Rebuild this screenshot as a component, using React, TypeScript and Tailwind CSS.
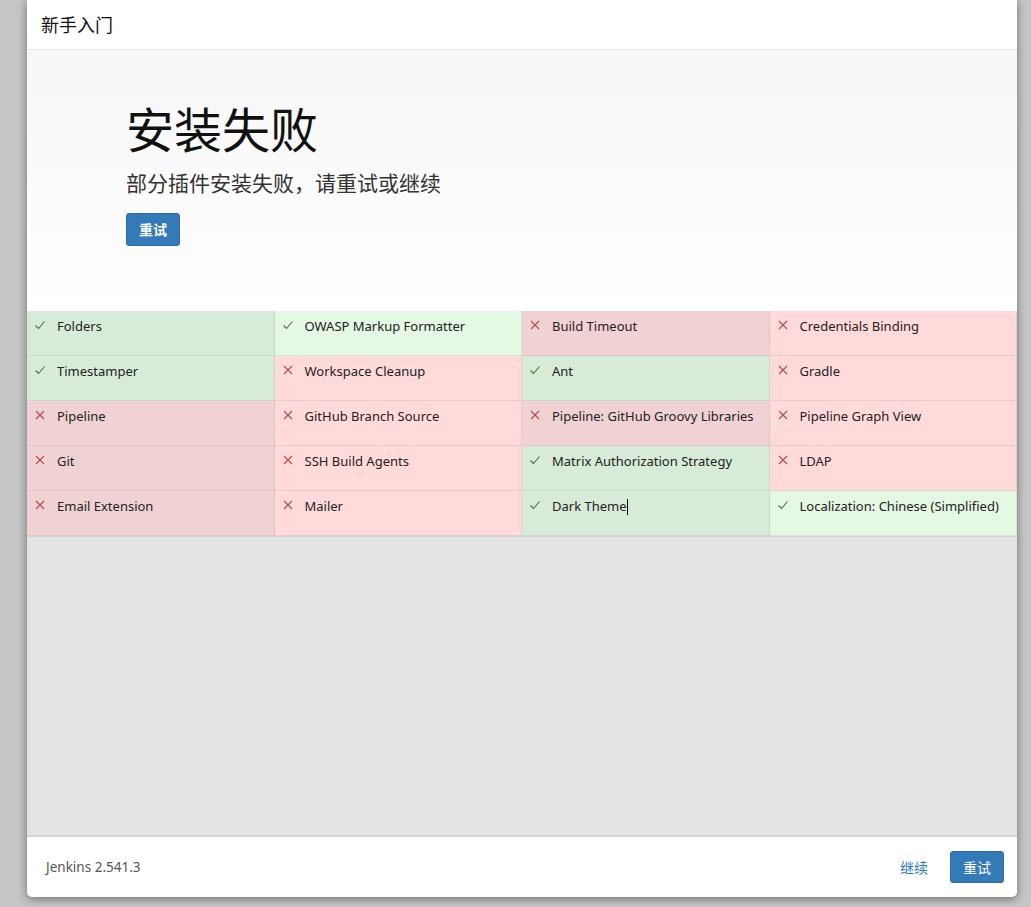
import React from "react";

type Item = { name: string; ok: boolean; caret?: boolean };

const items: Item[] = [
  { name: "Folders", ok: true },
  { name: "OWASP Markup Formatter", ok: true },
  { name: "Build Timeout", ok: false },
  { name: "Credentials Binding", ok: false },
  { name: "Timestamper", ok: true },
  { name: "Workspace Cleanup", ok: false },
  { name: "Ant", ok: true },
  { name: "Gradle", ok: false },
  { name: "Pipeline", ok: false },
  { name: "GitHub Branch Source", ok: false },
  { name: "Pipeline: GitHub Groovy Libraries", ok: false },
  { name: "Pipeline Graph View", ok: false },
  { name: "Git", ok: false },
  { name: "SSH Build Agents", ok: false },
  { name: "Matrix Authorization Strategy", ok: true },
  { name: "LDAP", ok: false },
  { name: "Email Extension", ok: false },
  { name: "Mailer", ok: false },
  { name: "Dark Theme", ok: true, caret: true },
  { name: "Localization: Chinese (Simplified)", ok: true },
];

const Check = () => (
  <svg width="12" height="12" viewBox="0 0 12 12" className="shrink-0">
    <path d="M1.5 6.5 L4.5 9.5 L10.5 2.5" fill="none" stroke="#3c763d" strokeWidth="1.1" />
  </svg>
);

const Cross = () => (
  <svg width="12" height="12" viewBox="0 0 12 12" className="shrink-0">
    <path d="M2 2 L10 10 M10 2 L2 10" fill="none" stroke="#b94a48" strokeWidth="1.1" />
  </svg>
);

function cellClass(ok: boolean, col: number) {
  const odd = col % 2 === 0;
  if (ok) return odd ? "bg-[#d8ebd8]" : "bg-[#e5f8e3]";
  return odd ? "bg-[#f1d2d4]" : "bg-[#ffdadb]";
}

export default function App() {
  return (
    <div
      className="min-h-[907px] w-full bg-[#c6c6c6] pl-[27px]"
      style={{ fontFamily: '"Segoe UI", "Noto Sans", "Noto Sans CJK SC", sans-serif' }}
    >
      <div className="w-[990px] h-[897px] flex flex-col bg-white rounded-b-[5px] shadow-[0_2px_10px_rgba(0,0,0,0.45)] overflow-hidden">
        <div className="h-[50px] shrink-0 border-b border-[#e3e3e3] px-[14px] flex items-center text-[18px] text-[#111]" style={{ fontFamily: '"Noto Sans CJK SC", sans-serif' }}>
          新手入门
        </div>
        <div className="h-[261px] shrink-0 bg-gradient-to-b from-[#f7f7f7] to-white pl-[99px] pt-[48px]" style={{ fontFamily: '"Noto Sans CJK SC", sans-serif' }}>
          <h1 className="text-[48px] leading-[58px] text-[#111] font-normal">安装失败</h1>
          <p className="mt-[11px] text-[21px] leading-[30px] text-[#333]">部分插件安装失败，请重试或继续</p>
          <button className="mt-[16px] w-[54px] h-[33px] bg-[#337ab7] border border-[#2e6da4] rounded-[3px] text-white text-[14px] font-bold">
            重试
          </button>
        </div>
        <div className="grid grid-cols-4 shrink-0 border-b border-[#d2d2d2] shadow-[0_1px_2px_rgba(0,0,0,0.08)]">
          {items.map((it, i) => (
            <div
              key={it.name}
              className={`h-[45px] flex items-start gap-[11px] pl-[7px] pt-[7px] border-r border-b border-[rgba(0,0,0,0.07)] text-[13px] leading-[17px] text-[#222] whitespace-nowrap ${cellClass(it.ok, i % 4)}`}
            >
              <span className="pt-[1px]">{it.ok ? <Check /> : <Cross />}</span>
              <span className="flex items-center">
                {it.name}
                {it.caret && <span className="inline-block w-px h-[16px] bg-black" />}
              </span>
            </div>
          ))}
        </div>
        <div className="flex-1 bg-[#e4e4e4]" />
        <div className="h-[62px] shrink-0 border-t-2 border-[#d4d4d4] flex items-center pl-[19px] pr-[13px]">
          <span className="text-[13.5px] text-[#555]">Jenkins 2.541.3</span>
          <span className="ml-auto text-[14px] text-[#337ab7] mr-[22px]" style={{ fontFamily: '"Noto Sans CJK SC", sans-serif' }}>继续</span>
          <button className="w-[54px] h-[32px] bg-[#337ab7] border border-[#2e6da4] rounded-[3px] text-white text-[14px]" style={{ fontFamily: '"Noto Sans CJK SC", sans-serif' }}>
            重试
          </button>
        </div>
      </div>
    </div>
  );
}
